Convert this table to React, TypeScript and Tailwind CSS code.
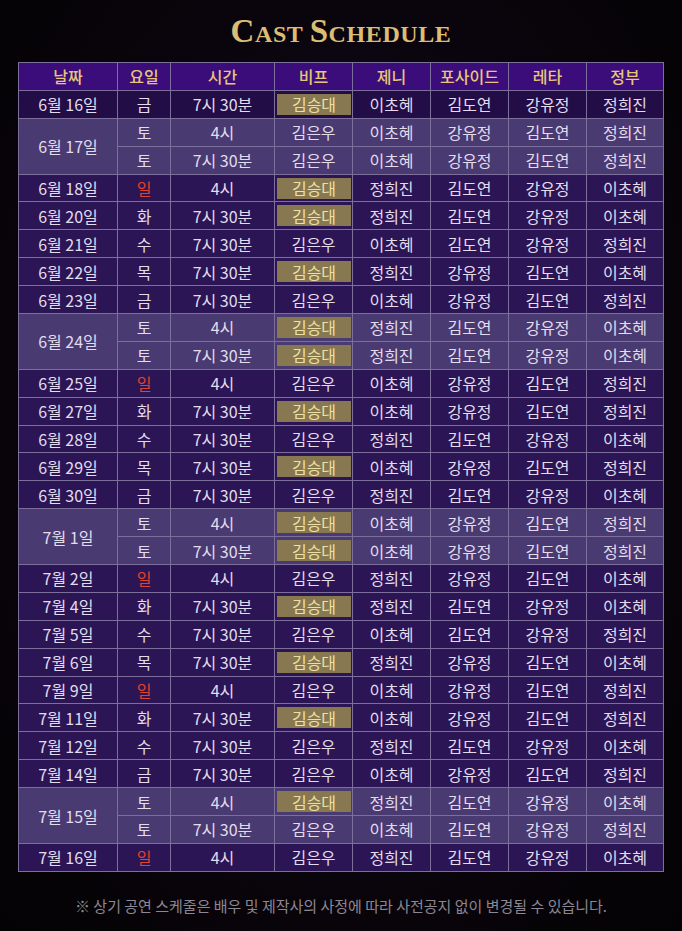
import React from "react";

type Row = {
  date?: string;
  span?: number;
  day: string;
  time: string;
  cast: string[];
  weekend?: boolean;
};

const rows: Row[] = [
  { date: "6월 16일", day: "금", time: "7시 30분", cast: ["김승대", "이초혜", "김도연", "강유정", "정희진"] },
  { date: "6월 17일", span: 2, day: "토", time: "4시", cast: ["김은우", "이초혜", "강유정", "김도연", "정희진"], weekend: true },
  { day: "토", time: "7시 30분", cast: ["김은우", "이초혜", "강유정", "김도연", "정희진"], weekend: true },
  { date: "6월 18일", day: "일", time: "4시", cast: ["김승대", "정희진", "김도연", "강유정", "이초혜"] },
  { date: "6월 20일", day: "화", time: "7시 30분", cast: ["김승대", "정희진", "김도연", "강유정", "이초혜"] },
  { date: "6월 21일", day: "수", time: "7시 30분", cast: ["김은우", "이초혜", "김도연", "강유정", "정희진"] },
  { date: "6월 22일", day: "목", time: "7시 30분", cast: ["김승대", "정희진", "강유정", "김도연", "이초혜"] },
  { date: "6월 23일", day: "금", time: "7시 30분", cast: ["김은우", "이초혜", "강유정", "김도연", "정희진"] },
  { date: "6월 24일", span: 2, day: "토", time: "4시", cast: ["김승대", "정희진", "김도연", "강유정", "이초혜"], weekend: true },
  { day: "토", time: "7시 30분", cast: ["김승대", "정희진", "김도연", "강유정", "이초혜"], weekend: true },
  { date: "6월 25일", day: "일", time: "4시", cast: ["김은우", "이초혜", "강유정", "김도연", "정희진"] },
  { date: "6월 27일", day: "화", time: "7시 30분", cast: ["김승대", "이초혜", "강유정", "김도연", "정희진"] },
  { date: "6월 28일", day: "수", time: "7시 30분", cast: ["김은우", "정희진", "김도연", "강유정", "이초혜"] },
  { date: "6월 29일", day: "목", time: "7시 30분", cast: ["김승대", "이초혜", "강유정", "김도연", "정희진"] },
  { date: "6월 30일", day: "금", time: "7시 30분", cast: ["김은우", "정희진", "김도연", "강유정", "이초혜"] },
  { date: "7월 1일", span: 2, day: "토", time: "4시", cast: ["김승대", "이초혜", "강유정", "김도연", "정희진"], weekend: true },
  { day: "토", time: "7시 30분", cast: ["김승대", "이초혜", "강유정", "김도연", "정희진"], weekend: true },
  { date: "7월 2일", day: "일", time: "4시", cast: ["김은우", "정희진", "강유정", "김도연", "이초혜"] },
  { date: "7월 4일", day: "화", time: "7시 30분", cast: ["김승대", "정희진", "김도연", "강유정", "이초혜"] },
  { date: "7월 5일", day: "수", time: "7시 30분", cast: ["김은우", "이초혜", "김도연", "강유정", "정희진"] },
  { date: "7월 6일", day: "목", time: "7시 30분", cast: ["김승대", "정희진", "강유정", "김도연", "이초혜"] },
  { date: "7월 9일", day: "일", time: "4시", cast: ["김은우", "이초혜", "강유정", "김도연", "정희진"] },
  { date: "7월 11일", day: "화", time: "7시 30분", cast: ["김승대", "이초혜", "강유정", "김도연", "정희진"] },
  { date: "7월 12일", day: "수", time: "7시 30분", cast: ["김은우", "정희진", "김도연", "강유정", "이초혜"] },
  { date: "7월 14일", day: "금", time: "7시 30분", cast: ["김은우", "이초혜", "강유정", "김도연", "정희진"] },
  { date: "7월 15일", span: 2, day: "토", time: "4시", cast: ["김승대", "정희진", "김도연", "강유정", "이초혜"], weekend: true },
  { day: "토", time: "7시 30분", cast: ["김은우", "이초혜", "김도연", "강유정", "정희진"], weekend: true },
  { date: "7월 16일", day: "일", time: "4시", cast: ["김은우", "정희진", "김도연", "강유정", "이초혜"] },
];

const headers = ["날짜", "요일", "시간", "비프", "제니", "포사이드", "레타", "정부"];

const cell = "border border-[#7d6f9b] h-[27.9px] p-0 text-center align-middle";

export default function App() {
  return (
    <div className="w-[682px] h-[931px] overflow-hidden bg-[#050306] bg-[radial-gradient(ellipse_at_50%_45%,#1c0f2a_0%,#0a050d_55%,#040204_100%)] font-['Noto_Sans_CJK_KR','Noto_Sans',sans-serif]">
      <div className="h-[62px] flex items-center justify-center pt-[1px]">
        <h1 className="font-['Liberation_Serif',serif] font-bold text-[#dcbd74] tracking-[0.6px] leading-none">
          <span className="text-[33px]">C</span>
          <span className="text-[24px]">AST </span>
          <span className="text-[33px]">S</span>
          <span className="text-[24px]">CHEDULE</span>
        </h1>
      </div>

      <table className="ml-[18px] w-[645px] table-fixed border-collapse text-[16px] leading-none">
        <colgroup>
          <col className="w-[99px]" />
          <col className="w-[53px]" />
          <col className="w-[104px]" />
          <col className="w-[78px]" />
          <col className="w-[78px]" />
          <col className="w-[78px]" />
          <col className="w-[78px]" />
          <col className="w-[77px]" />
        </colgroup>
        <thead>
          <tr className="bg-[#3a0d7a]">
            {headers.map((h) => (
              <th key={h} className={`${cell} font-medium text-[#e8c57b]`}>
                {h}
              </th>
            ))}
          </tr>
        </thead>
        <tbody className="text-[#e2dcec]">
          {rows.map((r, i) => (
            <tr
              key={i}
              className={r.weekend ? "bg-[#4a3a72]" : i === 0 ? "bg-[#220d47]" : "bg-[#2b1555]"}
            >
              {r.date && (
                <td rowSpan={r.span ?? 1} className={cell}>
                  {r.date}
                </td>
              )}
              <td className={`${cell} ${r.day === "일" ? "text-[#e2412f]" : ""}`}>{r.day}</td>
              <td className={cell}>{r.time}</td>
              {r.cast.map((c, j) =>
                j === 0 && c === "김승대" ? (
                  <td key={j} className={cell}>
                    <div className="ml-[2px] mr-[1px] h-[21px] flex items-center justify-center bg-[#877852] text-[#eee0a4]">
                      {c}
                    </div>
                  </td>
                ) : (
                  <td key={j} className={cell}>
                    {c}
                  </td>
                ),
              )}
            </tr>
          ))}
        </tbody>
      </table>

      <p className="mt-[24px] text-center text-[15px] leading-[20px] text-[#8d8794]">
        ※ 상기 공연 스케줄은 배우 및 제작사의 사정에 따라 사전공지 없이 변경될 수 있습니다.
      </p>
    </div>
  );
}
